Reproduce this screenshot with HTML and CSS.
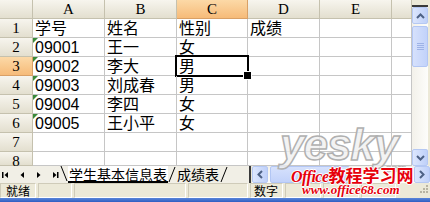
FILE: index.html
```html
<!DOCTYPE html>
<html>
<head>
<meta charset="utf-8">
<link rel="stylesheet" href="styles.css">
</head>
<body>
<div class="window">
  <div class="main">
    <div class="sheet">
      <div class="c h corner"></div>
      <div class="c h">A</div>
      <div class="c h">B</div>
      <div class="c h sel">C</div>
      <div class="c h">D</div>
      <div class="c h">E</div>
      <div class="c h"></div>

      <div class="c h">1</div>
      <div class="c">学号</div>
      <div class="c">姓名</div>
      <div class="c">性别</div>
      <div class="c">成绩</div>
      <div class="c"></div>
      <div class="c"></div>

      <div class="c h">2</div>
      <div class="c txt">09001</div>
      <div class="c">王一</div>
      <div class="c">女</div>
      <div class="c"></div>
      <div class="c"></div>
      <div class="c"></div>

      <div class="c h sel">3</div>
      <div class="c txt">09002</div>
      <div class="c">李大</div>
      <div class="c cur">男</div>
      <div class="c"></div>
      <div class="c"></div>
      <div class="c"></div>

      <div class="c h">4</div>
      <div class="c txt">09003</div>
      <div class="c">刘成春</div>
      <div class="c">男</div>
      <div class="c"></div>
      <div class="c"></div>
      <div class="c"></div>

      <div class="c h">5</div>
      <div class="c txt">09004</div>
      <div class="c">李四</div>
      <div class="c">女</div>
      <div class="c"></div>
      <div class="c"></div>
      <div class="c"></div>

      <div class="c h">6</div>
      <div class="c txt">09005</div>
      <div class="c">王小平</div>
      <div class="c">女</div>
      <div class="c"></div>
      <div class="c"></div>
      <div class="c"></div>

      <div class="c h">7</div>
      <div class="c"></div>
      <div class="c"></div>
      <div class="c"></div>
      <div class="c"></div>
      <div class="c"></div>
      <div class="c"></div>

      <div class="c h">8</div>
      <div class="c"></div>
      <div class="c"></div>
      <div class="c"></div>
      <div class="c"></div>
      <div class="c"></div>
      <div class="c"></div>
    </div>
    <div class="vscroll">
      <div class="split"></div>
      <div class="sbtn vbtn"><svg width="9" height="6" viewBox="0 0 9 6"><polyline points="1,5 4.5,1.5 8,5" fill="none" stroke="#4D6185" stroke-width="2"/></svg></div>
      <div class="vtrack">
        <div class="vthumb"><span></span><span></span><span></span><span></span></div>
      </div>
      <div class="sbtn vbtn"><svg width="9" height="6" viewBox="0 0 9 6"><polyline points="1,1 4.5,4.5 8,1" fill="none" stroke="#4D6185" stroke-width="2"/></svg></div>
    </div>
  </div>

  <div class="tabbar">
    <div class="nav">
      <svg width="60" height="17" viewBox="0 0 60 17">
        <rect x="2" y="6" width="1.5" height="6" fill="#000"/>
        <polygon points="8,6 8,12 4.5,9" fill="#000"/>
        <polygon points="24,6 24,12 20.5,9" fill="#000"/>
        <polygon points="37,6 37,12 40.5,9" fill="#000"/>
        <polygon points="53,6 53,12 56.5,9" fill="#000"/>
        <rect x="57" y="6" width="1.5" height="6" fill="#000"/>
      </svg>
    </div>
    <div class="tabs">
      <svg class="edge" width="8" height="17" viewBox="0 0 8 17"><line x1="1" y1="0" x2="7" y2="15" stroke="#000" stroke-width="1"/></svg>
      <div class="tab active">学生基本信息表</div>
      <svg class="edge" width="8" height="17" viewBox="0 0 8 17"><line x1="7" y1="1" x2="1" y2="16" stroke="#000" stroke-width="1"/></svg>
      <div class="tab">成绩表</div>
      <svg class="edge" width="8" height="17" viewBox="0 0 8 17"><line x1="7" y1="1" x2="1" y2="16" stroke="#000" stroke-width="1"/></svg>
    </div>
    <div class="hsplit"></div>
    <div class="hscroll">
      <div class="sbtn hbtn"><svg width="6" height="9" viewBox="0 0 6 9"><polyline points="5,1 1.5,4.5 5,8" fill="none" stroke="#4D6185" stroke-width="2"/></svg></div>
      <div class="htrack"><div class="hthumb"></div></div>
      <div class="sbtn hbtn"><svg width="6" height="9" viewBox="0 0 6 9"><polyline points="1,1 4.5,4.5 1,8" fill="none" stroke="#4D6185" stroke-width="2"/></svg></div>
    </div>
  </div>

  <div class="status">
    <div class="panel p1">就绪</div>
    <div class="panel p2"></div>
    <div class="panel p3"></div>
    <div class="panel p4"></div>
    <div class="panel p5">数字</div>
    <div class="panel p6"></div>
    <div class="panel p7"></div>
    <div class="panel p8"></div>
    <div class="grip">
      <svg width="14" height="12" viewBox="0 0 14 12">
        <rect x="10" y="2" width="2" height="2" fill="#B8B4A2"/>
        <rect x="7" y="5" width="2" height="2" fill="#B8B4A2"/>
        <rect x="10" y="5" width="2" height="2" fill="#B8B4A2"/>
        <rect x="4" y="8" width="2" height="2" fill="#B8B4A2"/>
        <rect x="7" y="8" width="2" height="2" fill="#B8B4A2"/>
        <rect x="10" y="8" width="2" height="2" fill="#B8B4A2"/>
      </svg>
    </div>
  </div>
  <div class="taskbar"></div>

  <div class="wm-yesky">yesky</div>
  <div class="wm-com">.com</div>
  <div class="wm-office"><span class="wm-en">Office</span>教程学习网</div>
  <div class="wm-url">www.office68.com</div>
</div>
</body>
</html>
```

FILE: styles.css
```css
* {
  box-sizing: border-box;
}

body {
  margin: 0;
  background: #ffffff;
  font-family: "Liberation Sans", "Noto Sans CJK SC", sans-serif;
}

.window {
  position: relative;
  width: 430px;
  height: 202px;
  overflow: hidden;
  display: flex;
  flex-direction: column;
  background: #ECE9D8;
}

.main {
  display: flex;
  height: 166px;
}

.sheet {
  width: 412px;
  display: grid;
  grid-template-columns: 33px 72px 72px 71px 72px 72px 20px;
  grid-template-rows: repeat(8, 19px) 14px;
  background: #ffffff;
  overflow: hidden;
}

.c {
  position: relative;
  border-right: 1px solid #C6C6C6;
  border-bottom: 1px solid #C6C6C6;
  padding-left: 2px;
  font-size: 16px;
  line-height: 19px;
  color: #000;
  white-space: nowrap;
}

.h {
  padding: 0;
  text-align: center;
  font-family: "Liberation Serif", "DejaVu Serif", serif;
  font-size: 15px;
  line-height: 19px;
  background: linear-gradient(#F7F5EE, #E3DFCF);
  border-right: 1px solid #C5C1AE;
  border-bottom: 1px solid #C5C1AE;
}

.h.sel {
  background: linear-gradient(#FCD9A7, #F6BB79);
  border-right-color: #D9A066;
  border-bottom-color: #D9A066;
}

.txt::before {
  content: "";
  position: absolute;
  left: 0;
  top: 0;
  width: 0;
  height: 0;
  border-top: 5px solid #3A8A3A;
  border-right: 5px solid transparent;
}

.cur::after {
  content: "";
  position: absolute;
  left: -2px;
  top: -2px;
  right: -2px;
  bottom: -2px;
  border: 2px solid #000;
}

.cur::before {
  content: "";
  position: absolute;
  right: -5px;
  bottom: -5px;
  width: 7px;
  height: 7px;
  background: #000;
  border: 1px solid #fff;
  z-index: 2;
}

/* vertical scrollbar */
.vscroll {
  width: 16px;
  display: flex;
  flex-direction: column;
  background: #F4F3EE;
}

.split {
  height: 7px;
  background: #ECE9D8;
  border-bottom: 2px solid #3A3A3A;
}

.sbtn {
  display: flex;
  align-items: center;
  justify-content: center;
  background: linear-gradient(90deg, #DCE6FD, #BFD0F9);
  border: 1px solid #B5C8F3;
  border-radius: 2px;
}

.vbtn {
  height: 17px;
}

.vtrack {
  flex: 1;
  padding-top: 2px;
  background: linear-gradient(90deg, #F3F1EA, #FDFDFB);
}

.vthumb {
  height: 41px;
  background: linear-gradient(90deg, #D6E1FC, #C2D2FA);
  border: 1px solid #B2C6F4;
  border-radius: 2px;
  display: flex;
  flex-direction: column;
  align-items: center;
  justify-content: center;
  gap: 1px;
}

.vthumb span {
  width: 7px;
  height: 1px;
  background: #9DB2E6;
}

/* tab bar */
.tabbar {
  display: flex;
  height: 17px;
  background: #F1EFE6;
}

.nav {
  width: 60px;
  display: flex;
}

.tabs {
  display: flex;
  align-items: stretch;
  width: 189px;
}

.edge {
  display: block;
  flex: none;
}

.tab {
  font-family: "Noto Sans CJK SC", sans-serif;
  font-size: 14px;
  line-height: 16px;
  padding: 0 1px;
  color: #000;
}

.tab.active {
  background: #ffffff;
  border-bottom: 2px solid #000;
}

.hsplit {
  width: 3px;
  border-left: 2px solid #3A3A3A;
  background: #ECE9D8;
}

.hscroll {
  flex: 1;
  display: flex;
  background: linear-gradient(#F3F1EA, #FDFDFB);
}

.hbtn {
  width: 16px;
}

.htrack {
  flex: 1;
  padding-left: 2px;
}

.hthumb {
  width: 80px;
  height: 100%;
  background: linear-gradient(#D6E1FC, #C2D2FA);
  border: 1px solid #B2C6F4;
  border-radius: 2px;
}

/* status bar */
.status {
  display: flex;
  height: 15px;
  background: #ECE9D8;
  gap: 2px;
}

.panel {
  border-top: 1px solid #CFCBB9;
  border-left: 1px solid #CFCBB9;
  border-right: 1px solid #FFFFFF;
  border-bottom: 1px solid #FFFFFF;
  font-family: "Noto Sans CJK SC", sans-serif;
  font-size: 12px;
  line-height: 13px;
  padding-left: 4px;
  color: #000;
  white-space: nowrap;
}

.p1 { width: 36px; padding-left: 5px; }
.p2 { width: 34px; }
.p3 { width: 112px; }
.p4 { width: 60px; }
.p5 { width: 33px; padding-left: 3px; }
.p6 { width: 36px; }
.p7 { width: 36px; }
.p8 { width: 35px; }

.grip {
  flex: 1;
  display: flex;
  justify-content: flex-end;
}

.taskbar {
  flex: 1;
  background: linear-gradient(#5A86DA, #2F5DC2);
}

/* watermarks */
.wm-yesky {
  position: absolute;
  left: 280px;
  top: 120px;
  font-family: "Liberation Sans", sans-serif;
  font-weight: bold;
  font-style: italic;
  font-size: 44px;
  line-height: 50px;
  letter-spacing: -1px;
  color: rgba(240, 240, 240, 0.8);
  -webkit-text-stroke: 1.5px #B0B0B0;
}

.wm-com {
  position: absolute;
  left: 383px;
  top: 163px;
  font-family: "Liberation Sans", sans-serif;
  font-weight: bold;
  font-size: 10px;
  color: rgba(230, 230, 230, 0.9);
  -webkit-text-stroke: 0.6px #A8A8A8;
}

.wm-office {
  position: absolute;
  left: 291px;
  top: 165px;
  font-family: "Noto Sans CJK SC", sans-serif;
  font-weight: bold;
  font-size: 17px;
  line-height: 20px;
  color: #E6000B;
  text-shadow: 1px 0 #fff, -1px 0 #fff, 0 1px #fff, 0 -1px #fff;
}

.wm-en {
  font-family: "Liberation Serif", serif;
  font-style: italic;
  font-size: 16px;
  letter-spacing: -0.5px;
}

.wm-url {
  position: absolute;
  left: 302px;
  top: 183px;
  font-family: "Liberation Serif", serif;
  font-style: italic;
  font-weight: bold;
  font-size: 13px;
  line-height: 14px;
  color: #E6000B;
  text-shadow: 1px 0 #fff, -1px 0 #fff, 0 1px #fff, 0 -1px #fff;
}
```
